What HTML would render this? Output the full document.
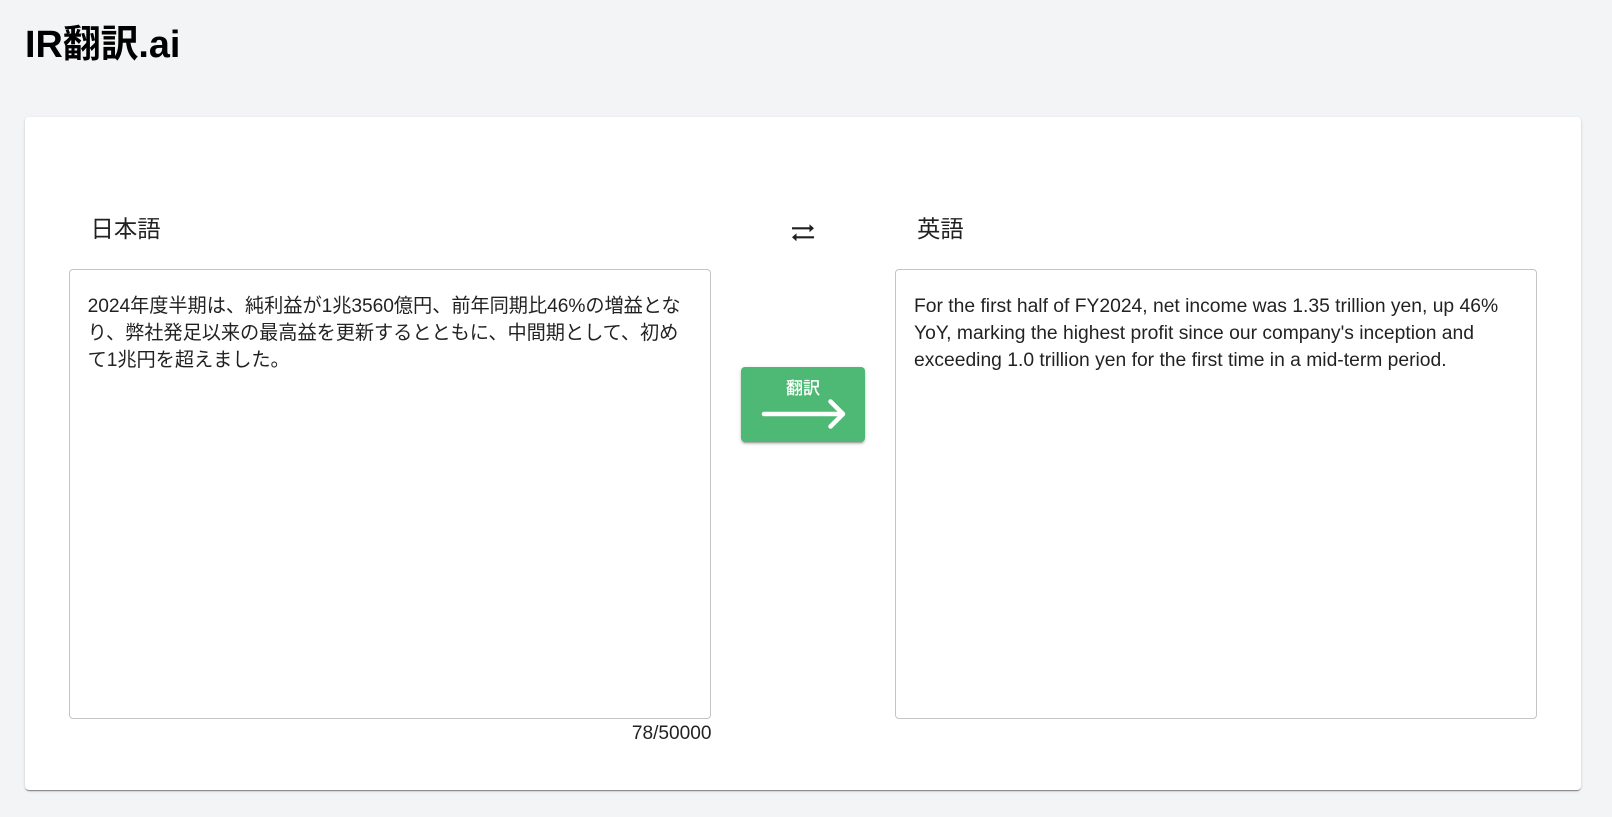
<!DOCTYPE html>
<html lang="ja">
<head>
<meta charset="utf-8">
<title>IR翻訳.ai</title>
<style>
html,body{margin:0;padding:0;width:1612px;height:817px;overflow:hidden;background:#f3f4f6;font-family:"Liberation Sans","Noto Sans CJK JP",sans-serif;color:rgba(0,0,0,.87)}
div,h1,span{position:absolute;margin:0;box-sizing:border-box}
h1{left:25px;top:23px;font-size:37.8px;line-height:44px;font-weight:700;color:#000;white-space:nowrap}
.card{left:25px;top:117px;width:1556px;height:673px;background:#fff;border-radius:4px;box-shadow:0 2px 1px -1px rgba(0,0,0,.3),0 1px 1px 0 rgba(0,0,0,.18),0 1px 3px 0 rgba(0,0,0,.12)}
.label{font-size:23.4px;line-height:32px;top:213px;white-space:nowrap}
.box{top:269px;height:450px;width:642px;background:#fff;border:1px solid #c4c4c4;border-radius:4px;padding:24px 18px;font-size:19.3px;line-height:26.8px;color:rgba(0,0,0,.87)}
.count{left:560px;width:151.5px;top:722px;text-align:right;font-size:19.1px;line-height:24px}
.btn{left:741px;top:367px;width:124px;height:75px;background:#4eb974;border-radius:4px;box-shadow:0 3px 1px -2px rgba(0,0,0,.2),0 2px 2px 0 rgba(0,0,0,.14),0 1px 5px 0 rgba(0,0,0,.12)}
.btn span{left:0;width:124px;top:11px;text-align:center;color:#fff;font-size:17px;line-height:22px;-webkit-text-stroke:.25px #fff}
svg{position:absolute}
</style>
</head>
<body>
<h1>IR翻訳.ai</h1>
<div class="card"></div>
<div class="label" style="left:90.5px">日本語</div>
<div class="label" style="left:917px">英語</div>
<svg style="left:790px;top:222px" width="26" height="22" viewBox="0 0 26 22"><path fill="#212121" d="M2 5.2H19.5V2.3L24 6.3 19.5 10.3V7.4H2zM24 14.2H6.5V11.3L2 15.3 6.5 19.3V16.4H24z"/></svg>
<div class="box" style="left:69px;font-size:19.2px;letter-spacing:-.04px;padding-left:17.6px">2024年度半期は、純利益が1兆3560億円、前年同期比46%の増益となり、弊社発足以来の最高益を更新するとともに、中間期として、初めて1兆円を超えました。</div>
<div class="box" style="left:895px">For the first half of FY2024, net income was 1.35 trillion yen, up 46% YoY, marking the highest profit since our company's inception and exceeding 1.0 trillion yen for the first time in a mid-term period.</div>
<div class="count">78/50000</div>
<div class="btn"><span>翻訳</span>
<svg style="left:20px;top:31px" width="86" height="32" viewBox="0 0 86 32"><path d="M3 16H82M69.500 3.500 82 16 69.500 28.500" fill="none" stroke="#fff" stroke-width="4.500" stroke-linecap="round" stroke-linejoin="round"/></svg></div>
</body>
</html>
